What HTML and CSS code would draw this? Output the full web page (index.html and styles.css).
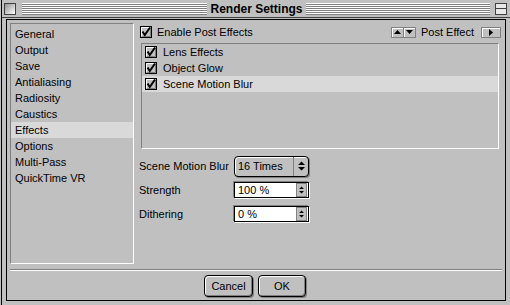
FILE: index.html
```html
<!DOCTYPE html>
<html>
<head>
    <meta charset="UTF-8">
    <title>Render Settings</title>
    <link rel="stylesheet" href="styles.css">
</head>
<body>
    <div class="window">
        <div class="titlebar">
            <span class="close-box"></span>
            <span class="stripes"></span>
            <span class="title">Render Settings</span>
            <span class="stripes"></span>
            <span class="shade-box"></span>
        </div>

        <div class="frame">
            <div class="main">
                <ul class="pages">
                    <li>General</li>
                    <li>Output</li>
                    <li>Save</li>
                    <li>Antialiasing</li>
                    <li>Radiosity</li>
                    <li>Caustics</li>
                    <li class="selected">Effects</li>
                    <li>Options</li>
                    <li>Multi-Pass</li>
                    <li>QuickTime VR</li>
                </ul>

                <div class="panel">
                    <div class="panel-head">
                        <label class="check">
                            <svg class="checkbox" width="12" height="12" viewBox="0 0 12 12"><rect x="0.5" y="0.5" width="11" height="11" fill="#c0c0c0" stroke="#000"/><path d="M1.5 10V1.5H10" stroke="#fff" fill="none"/><path d="M2 10.5H10.5V2" stroke="#808080" fill="none"/><path d="M2.5 5.5L4.8 9L10 1.5" stroke="#000" stroke-width="2" fill="none"/></svg>
                            Enable Post Effects
                        </label>
                        <div class="effect-nav">
                            <span class="arrow-btn"><svg width="7" height="4" viewBox="0 0 7 4"><path d="M0 4L3.5 0L7 4Z"/></svg></span>
                            <span class="arrow-btn"><svg width="7" height="4" viewBox="0 0 7 4"><path d="M0 0L3.5 4L7 0Z"/></svg></span>
                            <span class="nav-label">Post Effect</span>
                            <span class="play-btn"><svg width="4" height="7" viewBox="0 0 4 7"><path d="M0 0L4 3.5L0 7Z"/></svg></span>
                        </div>
                    </div>

                    <ul class="effects">
                        <li>
                            <svg class="checkbox" width="12" height="12" viewBox="0 0 12 12"><rect x="0.5" y="0.5" width="11" height="11" fill="#c0c0c0" stroke="#000"/><path d="M1.5 10V1.5H10" stroke="#fff" fill="none"/><path d="M2 10.5H10.5V2" stroke="#808080" fill="none"/><path d="M2.5 5.5L4.8 9L10 1.5" stroke="#000" stroke-width="2" fill="none"/></svg>
                            Lens Effects
                        </li>
                        <li>
                            <svg class="checkbox" width="12" height="12" viewBox="0 0 12 12"><rect x="0.5" y="0.5" width="11" height="11" fill="#c0c0c0" stroke="#000"/><path d="M1.5 10V1.5H10" stroke="#fff" fill="none"/><path d="M2 10.5H10.5V2" stroke="#808080" fill="none"/><path d="M2.5 5.5L4.8 9L10 1.5" stroke="#000" stroke-width="2" fill="none"/></svg>
                            Object Glow
                        </li>
                        <li class="selected">
                            <svg class="checkbox" width="12" height="12" viewBox="0 0 12 12"><rect x="0.5" y="0.5" width="11" height="11" fill="#c0c0c0" stroke="#000"/><path d="M1.5 10V1.5H10" stroke="#fff" fill="none"/><path d="M2 10.5H10.5V2" stroke="#808080" fill="none"/><path d="M2.5 5.5L4.8 9L10 1.5" stroke="#000" stroke-width="2" fill="none"/></svg>
                            Scene Motion Blur
                        </li>
                    </ul>

                    <div class="params">
                        <div class="param">
                            <span class="param-label">Scene Motion Blur</span>
                            <div class="popup">
                                <span class="popup-value">16 Times</span>
                                <span class="popup-arrows"><svg width="7" height="10" viewBox="0 0 7 10"><path d="M0 4L3.5 0.5L7 4Z M0 6L3.5 9.5L7 6Z"/></svg></span>
                            </div>
                        </div>
                        <div class="param">
                            <span class="param-label">Strength</span>
                            <div class="field">
                                <span class="field-value">100 %</span>
                                <span class="stepper"><svg width="5" height="10" viewBox="0 0 5 10"><path d="M0 4L2.5 1.5L5 4Z M0 6L2.5 8.5L5 6Z"/></svg></span>
                            </div>
                        </div>
                        <div class="param">
                            <span class="param-label">Dithering</span>
                            <div class="field">
                                <span class="field-value">0 %</span>
                                <span class="stepper"><svg width="5" height="10" viewBox="0 0 5 10"><path d="M0 4L2.5 1.5L5 4Z M0 6L2.5 8.5L5 6Z"/></svg></span>
                            </div>
                        </div>
                    </div>
                </div>
            </div>

            <div class="separator"></div>
            <div class="buttons">
                <button class="btn btn-cancel">Cancel</button>
                <button class="btn btn-ok">OK</button>
            </div>
        </div>
    </div>
</body>
</html>
```

FILE: styles.css
```css
/* Mac OS 8 style dialog */
:root {
    --face: #c0c0c0;
    --shadow: #808080;
    --light: #ffffff;
    --hilite: #d9d9d9;
    --text: #000000;
}

* {
    margin: 0;
    padding: 0;
    box-sizing: border-box;
}

body {
    width: 510px;
    height: 305px;
    overflow: hidden;
    background: var(--face);
    color: var(--text);
    font: 11px "Liberation Sans", Arial, sans-serif;
}

.window {
    height: 305px;
    margin-left: 1px;
    border-left: 1px solid #000;
}

/* title bar */
.titlebar {
    display: flex;
    align-items: center;
    height: 18px;
    padding: 0 3px 0 2px;
    border-bottom: 1px solid #404040;
}

.close-box {
    width: 12px;
    height: 12px;
    border: 1px solid #404040;
    background: linear-gradient(135deg, #909090, #ffffff);
}

.stripes {
    flex: 1;
    height: 12px;
    margin-left: 6px;
    background: repeating-linear-gradient(to bottom, var(--light) 0 1px, var(--shadow) 1px 2px);
}

.title {
    padding: 0 3px 0 4px;
    font-weight: bold;
    font-size: 12px;
}

.titlebar .stripes + .shade-box {
    margin-left: 5px;
}

.title + .stripes {
    margin-left: 0;
}

.shade-box {
    width: 12px;
    height: 12px;
    border: 1px solid #404040;
    background: linear-gradient(to bottom, #e8e8e8 0 4px, #404040 4px 5px, #e8e8e8 5px);
}

/* content frame */
.frame {
    height: 282px;
    margin: 1px 4px 0 4px;
    border: 1px solid #000;
}

.main {
    display: flex;
    height: 244px;
    padding: 3px 0 0 3px;
}

.pages {
    list-style: none;
    width: 124px;
    height: 241px;
    padding-top: 2px;
    border: 1px solid;
    border-color: var(--shadow) var(--light) var(--light) var(--shadow);
}

.pages li {
    height: 16px;
    line-height: 16px;
    padding-left: 4px;
}

.selected {
    background: var(--hilite);
}

.panel {
    width: 362px;
    margin-left: 5px;
    padding-top: 3px;
}

.panel-head {
    display: flex;
    align-items: center;
    justify-content: space-between;
    height: 12px;
}

.check {
    display: flex;
    align-items: center;
    margin-left: 1px;
}

.checkbox {
    display: block;
    flex: none;
    margin-right: 5px;
}

.effect-nav {
    display: flex;
    align-items: center;
}

.arrow-btn {
    display: flex;
    align-items: center;
    justify-content: center;
    width: 13px;
    height: 11px;
    border: 1px solid var(--shadow);
    background: var(--face);
    box-shadow: inset 1px 1px 0 var(--light);
}

.arrow-btn + .arrow-btn {
    margin-left: -1px;
}

.nav-label {
    margin: 0 7px 0 5px;
}

.play-btn {
    display: flex;
    align-items: center;
    justify-content: center;
    width: 20px;
    height: 11px;
    border: 1px solid var(--shadow);
    background: var(--face);
    box-shadow: inset 1px 1px 0 var(--light);
}

.effects {
    list-style: none;
    height: 106px;
    margin: 5px 2px 0 2px;
    border: 1px solid;
    border-color: var(--shadow) var(--light) var(--light) var(--shadow);
}

.effects li {
    display: flex;
    align-items: center;
    height: 16px;
    padding-left: 3px;
}

.effects .checkbox {
    margin-right: 6px;
}

.params {
    margin-top: 5px;
}

.param {
    display: flex;
    align-items: center;
    height: 24px;
}

.param-label {
    width: 95px;
}

.popup {
    display: flex;
    align-items: center;
    width: 75px;
    height: 21px;
    border: 1px solid #000;
    border-radius: 4px;
    background: var(--face);
    box-shadow: inset 1px 1px 0 var(--light), 1px 1px 0 var(--shadow);
}

.popup-value {
    padding-left: 3px;
}

.popup-arrows {
    display: flex;
    align-items: center;
    justify-content: center;
    width: 15px;
    height: 100%;
    margin-left: auto;
    border-left: 1px solid var(--shadow);
}

.field {
    display: flex;
    align-items: center;
    width: 75px;
    height: 16px;
    border: 1px solid #000;
    background: #fff;
    box-shadow: -1px -1px 0 var(--shadow), 1px 1px 0 var(--light);
}

.field-value {
    padding-left: 3px;
}

.stepper {
    display: flex;
    align-items: center;
    justify-content: center;
    width: 11px;
    height: 14px;
    margin: 0 1px 0 auto;
    border: 1px solid var(--shadow);
    background: var(--face);
}

/* footer */
.separator {
    margin: 5px 3px 0 3px;
    border-top: 1px solid var(--shadow);
    border-bottom: 1px solid var(--light);
}

.buttons {
    display: flex;
    justify-content: center;
    gap: 5px;
    margin-top: 4px;
    padding-right: 2px;
}

.btn {
    height: 22px;
    border: 1px solid #000;
    border-radius: 4px;
    background: var(--face);
    box-shadow: inset 1px 1px 0 var(--light), inset -1px -1px 0 var(--shadow), 1px 1px 0 var(--shadow);
    font: 11px "Liberation Sans", Arial, sans-serif;
    color: var(--text);
}

.btn-cancel {
    width: 49px;
}

.btn-ok {
    width: 48px;
}
```
